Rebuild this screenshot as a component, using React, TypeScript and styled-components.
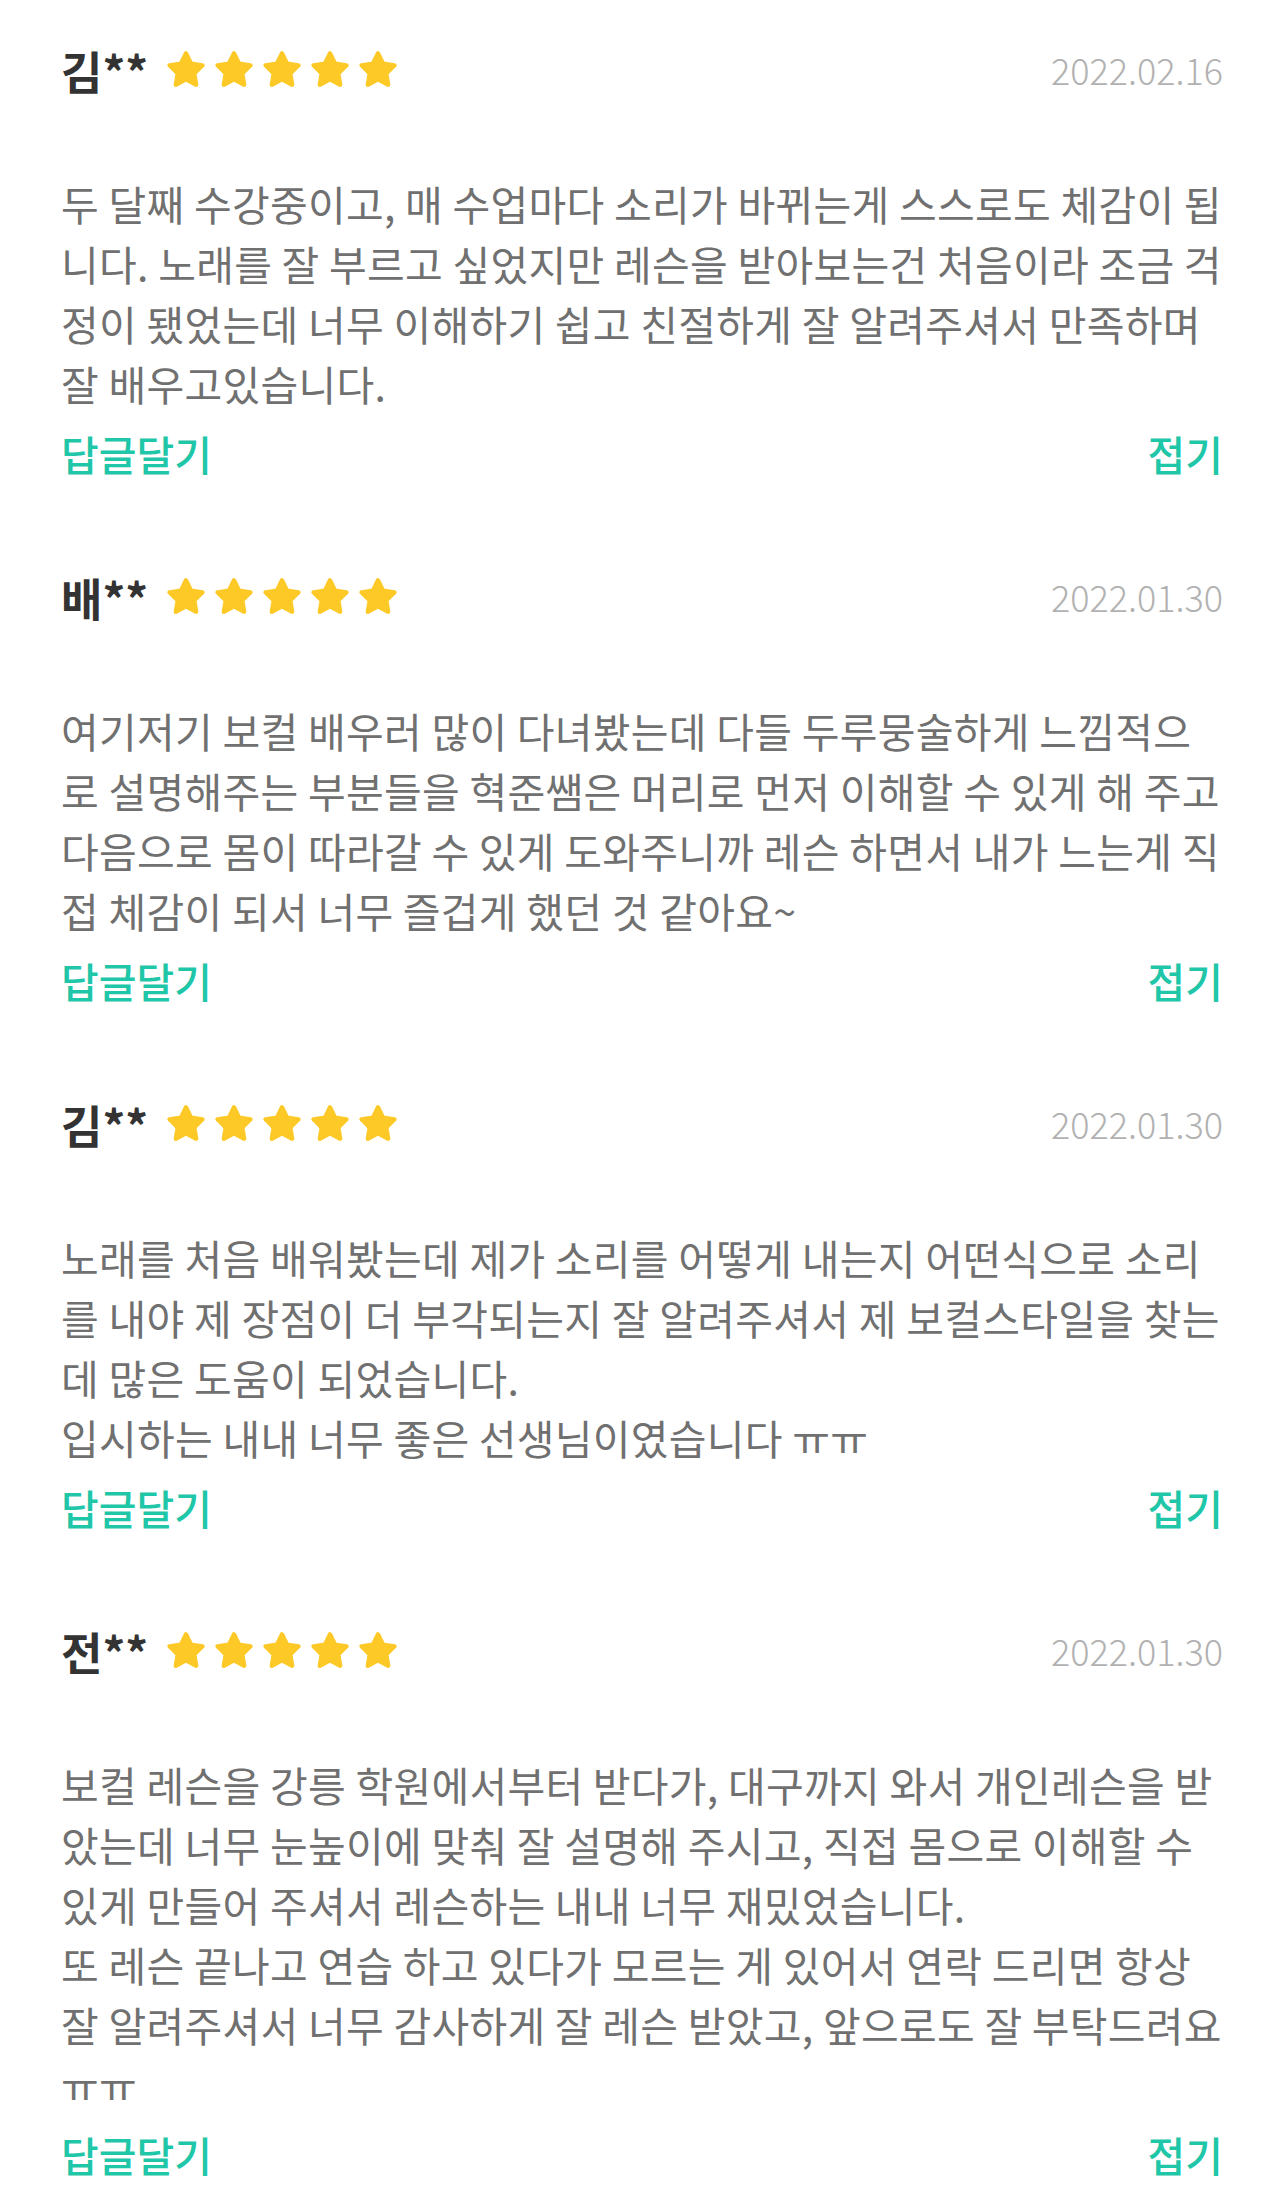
import React from "react";
import styled, { createGlobalStyle } from "styled-components";

const GlobalStyle = createGlobalStyle`
  html, body {
    margin: 0;
    padding: 0;
    background: #ffffff;
  }
  body {
    font-family: "Noto Sans CJK KR", "Noto Sans", sans-serif;
    -webkit-font-smoothing: antialiased;
  }
`;

const Page = styled.main`
  width: 1284px;
  background: #ffffff;
`;

const ReviewItem = styled.section`
  padding: 41px 61px 44px 61px;
`;

const Header = styled.header`
  display: flex;
  align-items: center;
  justify-content: space-between;
  height: 60px;
`;

const Author = styled.div`
  display: flex;
  align-items: center;
  gap: 18px;
`;

const Name = styled.span`
  font-size: 45px;
  line-height: 60px;
  font-weight: 700;
  color: #333333;
`;

const Stars = styled.div`
  display: flex;
  align-items: center;
  gap: 8px;
  margin-top: -4px;
`;

const DateText = styled.span`
  font-size: 36px;
  line-height: 60px;
  font-weight: 300;
  color: #b1b1b1;
  margin-top: -4px;
`;

const Body = styled.p`
  margin: 72px 0 0 0;
  font-size: 41px;
  line-height: 60px;
  letter-spacing: 0.28px;
  color: #707070;
  white-space: pre-line;
`;

const Actions = styled.div`
  display: flex;
  justify-content: space-between;
  margin-top: 10px;
`;

const LinkButton = styled.button`
  border: 0;
  background: none;
  padding: 0;
  font-family: inherit;
  font-size: 41px;
  line-height: 60px;
  font-weight: 500;
  color: #1fc6a8;
  cursor: pointer;
`;

const StarIcon = () => (
  <svg width="40" height="38" viewBox="0 0 24 23" aria-hidden="true">
    <polygon
      points="12,2 15.09,8.26 22,9.27 17,14.14 18.18,21.02 12,17.77 5.82,21.02 7,14.14 2,9.27 8.91,8.26"
      fill="#FDC926"
      stroke="#FDC926"
      strokeWidth="2.6"
      strokeLinejoin="round"
    />
  </svg>
);

type Review = { name: string; date: string; text: string; rating: number };

const reviews: Review[] = [
  {
    name: "김**",
    date: "2022.02.16",
    rating: 5,
    text: "두 달째 수강중이고, 매 수업마다 소리가 바뀌는게 스스로도 체감이 됩니다. 노래를 잘 부르고 싶었지만 레슨을 받아보는건 처음이라 조금 걱정이 됐었는데 너무 이해하기 쉽고 친절하게 잘 알려주셔서 만족하며 잘 배우고있습니다.",
  },
  {
    name: "배**",
    date: "2022.01.30",
    rating: 5,
    text: "여기저기 보컬 배우러 많이 다녀봤는데 다들 두루뭉술하게 느낌적으로 설명해주는 부분들을 혁준쌤은 머리로 먼저 이해할 수 있게 해 주고 다음으로 몸이 따라갈 수 있게 도와주니까 레슨 하면서 내가 느는게 직접 체감이 되서 너무 즐겁게 했던 것 같아요~",
  },
  {
    name: "김**",
    date: "2022.01.30",
    rating: 5,
    text: "노래를 처음 배워봤는데 제가 소리를 어떻게 내는지 어떤식으로 소리를 내야 제 장점이 더 부각되는지 잘 알려주셔서 제 보컬스타일을 찾는데 많은 도움이 되었습니다.\n입시하는 내내 너무 좋은 선생님이였습니다 ㅠㅠ",
  },
  {
    name: "전**",
    date: "2022.01.30",
    rating: 5,
    text: "보컬 레슨을 강릉 학원에서부터 받다가, 대구까지 와서 개인레슨을 받았는데 너무 눈높이에 맞춰 잘 설명해 주시고, 직접 몸으로 이해할 수 있게 만들어 주셔서 레슨하는 내내 너무 재밌었습니다.\n또 레슨 끝나고 연습 하고 있다가 모르는 게 있어서 연락 드리면 항상 잘 알려주셔서 너무 감사하게 잘 레슨 받았고, 앞으로도 잘 부탁드려요 ㅠㅠ",
  },
];

export default function App() {
  return (
    <>
      <GlobalStyle />
      <Page>
        {reviews.map((r, i) => (
          <ReviewItem key={i}>
            <Header>
              <Author>
                <Name>{r.name}</Name>
                <Stars>
                  {Array.from({ length: r.rating }).map((_, k) => (
                    <StarIcon key={k} />
                  ))}
                </Stars>
              </Author>
              <DateText>{r.date}</DateText>
            </Header>
            <Body>{r.text}</Body>
            <Actions>
              <LinkButton>답글달기</LinkButton>
              <LinkButton>접기</LinkButton>
            </Actions>
          </ReviewItem>
        ))}
      </Page>
    </>
  );
}
